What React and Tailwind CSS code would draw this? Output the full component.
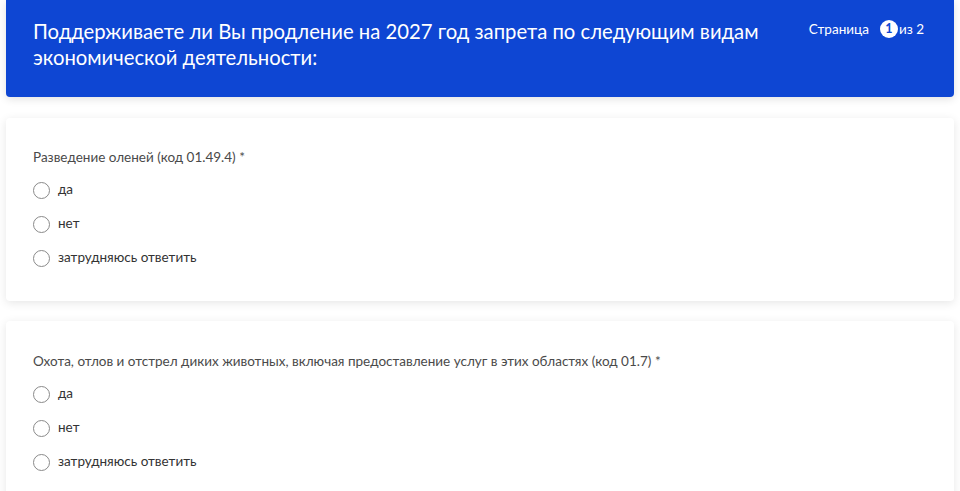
import React from "react";

function Radio({ label }) {
  return (
    <label className="flex items-center h-[34px] gap-[8px] cursor-pointer">
      <span className="w-[17px] h-[17px] rounded-full border border-[#8a8a8a] bg-white shrink-0"></span>
      <span className="text-[13.5px] text-[#333333] leading-none">{label}</span>
    </label>
  );
}

function Question({ title, className }) {
  return (
    <div className={"mx-[6px] bg-white rounded-[4px] shadow-[0_2px_10px_rgba(0,0,0,0.10)] px-[27px] " + className}>
      <div className="text-[13.5px] text-[#4a4a4a] leading-[18px]">
        {title} <span className="text-[#4a4a4a]">*</span>
      </div>
      <div className="mt-[7px] flex flex-col">
        <Radio label="да" />
        <Radio label="нет" />
        <Radio label="затрудняюсь ответить" />
      </div>
    </div>
  );
}

export default function App() {
  return (
    <div className="w-[960px] h-[491px] overflow-hidden bg-white" style={{ fontFamily: "Lato, 'Noto Sans', sans-serif" }}>
      <div className="mx-[6px] h-[97px] bg-[#0e46d3] rounded-b-[4px] shadow-[0_2px_8px_rgba(0,0,0,0.12)] flex justify-between pl-[27px] pr-[30px] pt-[18px]">
        <div className="text-[20.3px] leading-[26px] text-white w-[760px]">
          Поддерживаете ли Вы продление на 2027 год запрета по следующим видам экономической деятельности:
        </div>
        <div className="flex items-center h-[22px] text-[13.5px] text-white whitespace-nowrap">
          <span>Страница</span>
          <span className="ml-[11px] w-[18px] h-[18px] rounded-full bg-white text-[#0e46d3] font-bold text-[12.5px] flex items-center justify-center">1</span>
          <span className="ml-[1px]">из 2</span>
        </div>
      </div>
      <Question className="mt-[21px] pt-[30px] pb-[26px]" title="Разведение оленей (код 01.49.4)" />
      <Question className="mt-[20px] pt-[31px] pb-[26px]" title="Охота, отлов и отстрел диких животных, включая предоставление услуг в этих областях (код 01.7)" />
    </div>
  );
}
